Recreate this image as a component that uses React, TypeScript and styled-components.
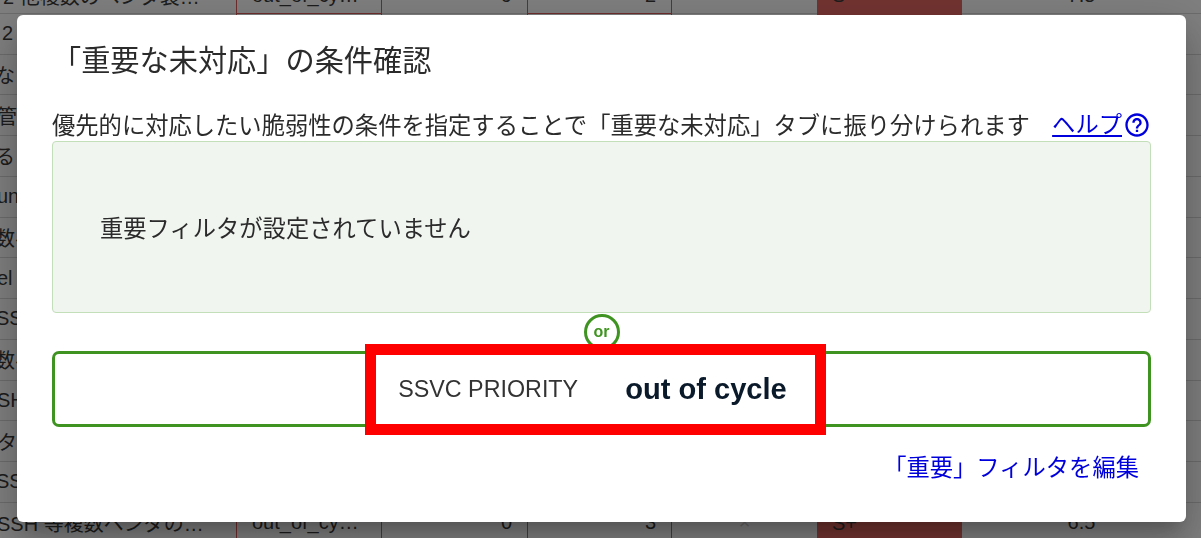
import React from "react";
import styled, { createGlobalStyle } from "styled-components";
import { MdHelpOutline } from "react-icons/md";

const JP = `"Liberation Sans", "Noto Sans CJK JP", sans-serif`;

const GlobalStyle = createGlobalStyle`
  html, body {
    margin: 0;
    height: 100%;
    overflow: hidden;
    background: #fff;
    font-family: ${JP};
    text-spacing-trim: space-all;
  }
`;

const Table = styled.div`
  margin-top: -27px;
  color: #3a3a3a;
  font-size: 20px;
`;

const Row = styled.div`
  display: grid;
  grid-template-columns: 236px 145.5px 145.5px 145px 145px 145px 1fr;
  height: 40.75px;
  box-sizing: border-box;
  border-bottom: 1px solid #d8d8d8;

  &:first-child {
    padding-top: 5px;
  }
`;

const NameCell = styled.div<{ $indent: number }>`
  display: flex;
  align-items: center;
  margin-left: ${({ $indent }) => $indent}px;
  white-space: nowrap;
  overflow: hidden;
`;

const FilterCell = styled.div<{ $align?: string }>`
  display: flex;
  align-items: center;
  justify-content: ${({ $align }) => $align || "flex-start"};
  padding: 0 15px;
  margin-bottom: -1px;
  border: solid #e05a5a;
  border-width: 0 1px 1px;
`;

const MarkCell = styled.div`
  display: flex;
  align-items: center;
  justify-content: center;
  color: #cfcfcf;
`;

const NumberCell = styled.div`
  display: flex;
  align-items: center;
  justify-content: flex-end;
  padding: 0 15px;
`;

const GradeCell = styled.div`
  display: flex;
  align-items: center;
  padding: 0 15px;
  margin-bottom: -1px;
  background: #e66862;
`;

const ScoreCell = styled.div`
  display: flex;
  align-items: center;
  justify-content: center;
`;

const Overlay = styled.div`
  position: fixed;
  inset: 0;
  box-sizing: border-box;
  padding: 15px 15px 16px 17px;
  background: rgba(0, 0, 0, 0.5);
`;

const Modal = styled.div`
  box-sizing: border-box;
  display: flex;
  flex-direction: column;
  width: 1169px;
  height: 507px;
  padding: 0 35px;
  background: #fff;
  border-radius: 6px;
  color: #2b2b2b;
  box-shadow: 0 24px 38px 3px rgba(0, 0, 0, 0.14), 0 9px 46px 8px rgba(0, 0, 0, 0.12),
    0 11px 15px -7px rgba(0, 0, 0, 0.2);
`;

const Title = styled.h2`
  box-sizing: border-box;
  margin: 0;
  height: 92px;
  padding-bottom: 7px;
  display: flex;
  align-items: center;
  font-size: 29.2px;
  font-weight: 400;
`;

const Lead = styled.div`
  display: flex;
  justify-content: space-between;
  align-items: flex-end;
  height: 34px;
  font-size: 23.3px;
  line-height: 30px;
`;

const HelpLink = styled.a`
  display: flex;
  align-items: center;
  color: #0000dd;
  text-decoration: none;
  height: 32px;
  margin-top: -4px;

  span {
    text-decoration: underline;
  }

  svg {
    margin-left: 1px;
  }
`;

const EmptyBox = styled.div`
  box-sizing: border-box;
  display: flex;
  align-items: center;
  height: 172px;
  padding-left: 47px;
  background: #f0f5ef;
  border: 1px solid #c3dfb9;
  border-radius: 4px;
  font-size: 23.3px;
`;

const Divider = styled.div`
  display: flex;
  justify-content: center;
  height: 38px;
`;

const OrBadge = styled.div`
  box-sizing: border-box;
  display: flex;
  align-items: center;
  justify-content: center;
  width: 36px;
  height: 36px;
  margin-top: 1px;
  padding-bottom: 1px;
  background: #fff;
  border: 3px solid #3f9421;
  border-radius: 50%;
  color: #3f9421;
  font-size: 16px;
  font-weight: 700;
`;

const PriorityBox = styled.div`
  box-sizing: border-box;
  position: relative;
  display: flex;
  align-items: center;
  justify-content: center;
  gap: 47px;
  height: 76px;
  border: 3px solid #3f9421;
  border-radius: 7px;
  padding-right: 18px;
`;

const PriorityLabel = styled.span`
  font-size: 23.3px;
  color: #333;
`;

const PriorityValue = styled.span`
  font-size: 29.1px;
  font-weight: 700;
  color: #0b1a2b;
`;

const Highlight = styled.div`
  box-sizing: border-box;
  position: absolute;
  left: 310px;
  top: -10px;
  width: 461px;
  height: 91px;
  border: 11px solid #ff0000;
`;

const Footer = styled.div`
  box-sizing: border-box;
  display: flex;
  justify-content: flex-end;
  align-items: center;
  height: 80px;
  padding: 0 12px 2px 0;
`;

const EditLink = styled.a`
  color: #0000dd;
  font-size: 23.3px;
  text-decoration: none;
`;

const names = [
  { text: "2 他複数のベンダ製…", indent: 3 },
  { text: "2", indent: 2 },
  { text: "な", indent: -5 },
  { text: "管理", indent: -3 },
  { text: "る", indent: -5 },
  { text: "un", indent: -3 },
  { text: "数ベ", indent: -5 },
  { text: "el", indent: -3 },
  { text: "SSH", indent: -4 },
  { text: "数ベ", indent: -5 },
  { text: "SH", indent: -3 },
  { text: "タ", indent: -3 },
  { text: "SSH", indent: -4 },
  { text: "SSH 等複数ベンダの…", indent: -3 },
];

export default function App() {
  return (
    <>
      <GlobalStyle />
      <Table>
        {names.map((name, i) => (
          <Row key={i}>
            <NameCell $indent={name.indent}>{name.text}</NameCell>
            <FilterCell>out_of_cy…</FilterCell>
            <NumberCell>{i === 0 ? "9" : "0"}</NumberCell>
            <FilterCell $align="flex-end">{i === 0 ? "2" : "3"}</FilterCell>
            <MarkCell>×</MarkCell>
            <GradeCell>S+</GradeCell>
            <ScoreCell>{i === 0 ? "7.5" : "6.5"}</ScoreCell>
          </Row>
        ))}
      </Table>
      <Overlay>
        <Modal>
          <Title>「重要な未対応」の条件確認</Title>
          <Lead>
            <span>優先的に対応したい脆弱性の条件を指定することで「重要な未対応」タブに振り分けられます</span>
            <HelpLink href="#">
              <span>ヘルプ</span>
              <MdHelpOutline size={28} />
            </HelpLink>
          </Lead>
          <EmptyBox>重要フィルタが設定されていません</EmptyBox>
          <Divider>
            <OrBadge>or</OrBadge>
          </Divider>
          <PriorityBox>
            <PriorityLabel>SSVC PRIORITY</PriorityLabel>
            <PriorityValue>out of cycle</PriorityValue>
            <Highlight />
          </PriorityBox>
          <Footer>
            <EditLink href="#">「重要」フィルタを編集</EditLink>
          </Footer>
        </Modal>
      </Overlay>
    </>
  );
}
